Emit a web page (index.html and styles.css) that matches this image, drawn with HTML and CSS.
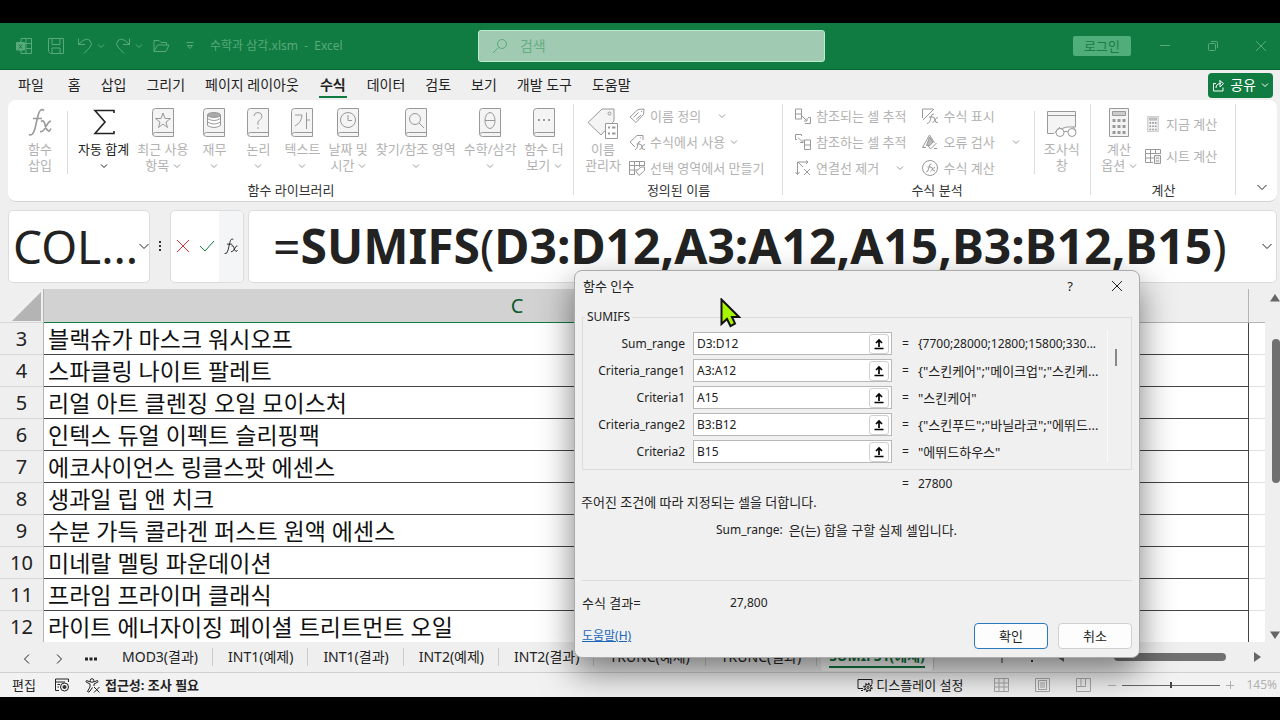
FILE: index.html
```
<!DOCTYPE html>
<html lang="ko">
<head>
  <meta charset="UTF-8" />
  <title>수학과 삼각.xlsm - Excel</title>
  <link rel="stylesheet" href="styles.css">
</head>
<body>

<svg class="defs" width="0" height="0">
  <symbol id="chev" viewBox="0 0 8 8"><path d="M1 2.500L4 5.500L7 2.500"/></symbol>
  <symbol id="book" viewBox="0 0 22 29">
    <path fill="#f4f4f4" d="M3.5 .5H21.5V28.5H3.5Q.5 28.5 .5 25.5V3.5Q.5 .5 3.5 .5Z"/>
    <path d="M.5 26.5Q1 24.5 3.5 24.5H21.5"/>
  </symbol>
  <symbol id="fx" viewBox="0 0 24 28">
    <path stroke-width="1.6" d="M1 26Q5 28 7 20L10 7Q12 -1 16 2M5 10H14M13 13Q16 11 17 16T20 22Q21 24 23 20M23 13Q21 12 18 18T12 23"/>
  </symbol>
  <symbol id="calc" viewBox="0 0 20 29">
    <path fill="#f4f4f4" d="M.5 .5H19.5V28.5H.5Z"/>
    <path d="M3.5 3.5H16.5V7.5H3.5Z" fill="#ccc"/>
    <path stroke-width="3" stroke-dasharray="3 2" d="M3.5 12.5H17M3.5 18.5H17M3.5 24.5H17"/>
  </symbol>
  <symbol id="pick" viewBox="0 0 12 12"><path d="M6 9V2M3 5L6 2L9 5M1.500 10.500H10.500" stroke-width="1.700"/></symbol>
</svg>

<header id="titlebar">
  <div class="quick">
    <button aria-label="Excel"><svg width="16" height="16" viewBox="0 0 16 16"><path d="M5 4V.5H15.500V15.500H5V12M10 .5V15.500M5 5.500H15.500M10 10.500H15.500"/><path fill="#58aa7b" d="M.5 4.500H8.500V12H.5Z"/><path stroke="#107c41" d="M3 6.500L6 10.500M6 6.500L3 10.500"/></svg></button>
    <button aria-label="저장"><svg width="16" height="16" viewBox="0 0 16 16"><path d="M.5 .5H15.500V15.500H2.500L.5 13.500ZM4 .5V6.500H12V.5M4 15.500V10H12V15.500"/></svg></button>
    <button aria-label="실행 취소"><svg width="16" height="16" viewBox="0 0 16 16"><path d="M1.500 .5V6.500H8M1.500 6.500L6 2.500Q10 -.5 13 2.500Q16 6 13 9L7 15.500"/></svg><svg class="chev"><use href="#chev"/></svg></button>
    <button aria-label="다시 실행"><svg width="16" height="16" viewBox="0 0 16 16"><path d="M14.500 .5V6.500H8M14.500 6.500L10 2.500Q6 -.5 3 2.500Q0 6 3 9L9 15.500"/></svg><svg class="chev"><use href="#chev"/></svg></button>
    <button aria-label="열기"><svg width="17" height="14" viewBox="0 0 17 14"><path d="M1 12.500V1.500H6L8 3.500H13.500V6M1 12.500L4.500 6H16L13 12.500Z"/></svg></button>
    <button aria-label="빠른 실행 도구 모음" class="more"><svg width="8" height="8" viewBox="0 0 8 8"><path d="M.5 .5H7.500M1.500 3.500H6.500L4 6.500Z"/></svg></button>
    <span class="filename">수학과 삼각.xlsm&nbsp; -&nbsp; Excel</span>
  </div>
  <div class="search">
    <svg width="16" height="16" viewBox="0 0 16 16"><circle cx="10" cy="6" r="4.500"/><path d="M6.500 9.500L1 15"/></svg>
    <input type="text" placeholder="검색" aria-label="검색">
  </div>
  <div class="window-btns">
    <button class="login">로그인</button>
    <button aria-label="최소화"><svg width="12" height="12" viewBox="0 0 12 12"><path d="M1 5.500H11"/></svg></button>
    <button aria-label="복원"><svg width="12" height="12" viewBox="0 0 12 12"><rect x="1.500" y="3.500" width="7" height="7" rx="1"/><path d="M4 1.500H9Q10.500 1.500 10.500 3V8"/></svg></button>
    <button aria-label="닫기"><svg width="12" height="12" viewBox="0 0 12 12"><path d="M1 1L11 11M11 1L1 11"/></svg></button>
  </div>
</header>

<nav id="menu">
  <button class="file">파일</button>
  <button>홈</button>
  <button>삽입</button>
  <button>그리기</button>
  <button>페이지 레이아웃</button>
  <button class="active">수식</button>
  <button>데이터</button>
  <button>검토</button>
  <button>보기</button>
  <button>개발 도구</button>
  <button>도움말</button>
  <button class="share"><svg width="13" height="13" viewBox="0 0 13 13"><path d="M4 4.500H1.500V12H11V8.500M4 9Q4 4.500 9 4.500M7.500 1.500L11.500 4.500L8 8V1.500"/></svg>공유<svg class="chev"><use href="#chev"/></svg></button>
</nav>

<section id="ribbon">
  <div class="group library">
    <div class="tools">
      <button class="big"><svg width="24" height="29"><use href="#fx"/></svg>함수<br>삽입</button>
      <span class="line"></span>
      <button class="big on"><svg width="22" height="29" viewBox="0 0 22 29"><path stroke-width="1.600" d="M21 5V2.500H2L12 14L2 25.500H21V23"/></svg>자동 합계<br><svg class="chev"><use href="#chev"/></svg></button>
      <button class="big"><svg width="22" height="29"><use href="#book"/><path d="M11 5L13 10.500H18.500L14 14L15.500 19.500L11 16L6.500 19.500L8 14L3.500 10.500H9Z"/></svg>최근 사용<br>항목 <svg class="chev"><use href="#chev"/></svg></button>
      <button class="big"><svg width="22" height="29"><use href="#book"/><path fill="#fff" d="M4.500 7V17.500Q11 21.500 17.500 17.500V7M4.500 10.500Q11 14.500 17.500 10.500M4.500 14Q11 18 17.500 14"/><ellipse cx="11" cy="7" rx="6.500" ry="2.500" fill="#aaa"/></svg>재무<br><svg class="chev"><use href="#chev"/></svg></button>
      <button class="big"><svg width="22" height="29"><use href="#book"/><path d="M7 8Q7 4.500 11 4.500T15 8.500Q15 10.500 12.500 12T11 17M11 19V21"/></svg>논리<br><svg class="chev"><use href="#chev"/></svg></button>
      <button class="big"><svg width="22" height="29"><use href="#book"/><path d="M4 7H11Q11 14 4 18M15.500 4.500V21M15.500 12H19"/></svg>텍스트<br><svg class="chev"><use href="#chev"/></svg></button>
      <button class="big"><svg width="22" height="29"><use href="#book"/><circle cx="11" cy="12" r="7.500"/><path d="M11 7V12.500H15"/></svg>날짜 및<br>시간 <svg class="chev"><use href="#chev"/></svg></button>
      <button class="big"><svg width="22" height="29"><use href="#book"/><circle cx="10" cy="11" r="5.500"/><path d="M14 15L19 20"/></svg>찾기/참조 영역<br><svg class="chev"><use href="#chev"/></svg></button>
      <button class="big"><svg width="22" height="29"><use href="#book"/><ellipse cx="11" cy="12.500" rx="5" ry="8"/><path d="M6 12.500H16"/></svg>수학/삼각<br><svg class="chev"><use href="#chev"/></svg></button>
      <button class="big"><svg width="22" height="29"><use href="#book"/><path stroke-width="2" stroke-dasharray="2 3" d="M5 12H18"/></svg>함수 더<br>보기 <svg class="chev"><use href="#chev"/></svg></button>
    </div>
    <h2>함수 라이브러리</h2>
  </div>

  <div class="group names">
    <div class="tools">
      <button class="big"><svg width="32" height="31" viewBox="0 0 32 31"><path fill="#f4f4f4" d="M1 14.500L15 1H27V13L14 27Z"/><circle cx="22.500" cy="5.500" r="1.500"/><path fill="#fff" d="M18.500 15.500H30.500V30.500H18.500Z"/><path d="M21 19.500H23M21 25.500H23M25 19.500H28.500M25 25.500H28.500" stroke-width="2"/></svg>이름<br>관리자</button>
      <div class="stack">
        <button class="small"><svg viewBox="0 0 16 16"><path d="M1 9L9 1.500L15 1L14.500 6.500L7 14.500ZM4.500 9.500L9.500 4.500M7 11.500L12 7"/><path d="M12.500 3V4"/></svg>이름 정의<svg class="chev far"><use href="#chev"/></svg></button>
        <button class="small"><svg viewBox="0 0 16 16"><path d="M6 13L1 8L8 1.500H14V6"/><path d="M11.500 3.500V4.500M6 16Q8 16 9 10Q9.500 7 11.500 7.500M7.500 10H11M11 10.500Q13 10 13 13T16 15.500M16 10.500Q14 10.500 13 13T10.500 15.500"/></svg>수식에서 사용<svg class="chev"><use href="#chev"/></svg></button>
        <button class="small"><svg viewBox="0 0 16 16"><path d="M6 14.500H.5V1.500H15.500V6M.5 5.500H15.500M.5 10H9M5.500 1.500V14M10.500 1.500V7"/><path fill="#fff" d="M7 11.500L12 7H15.500V10.500L10 15.500Z"/></svg>선택 영역에서 만들기</button>
      </div>
    </div>
    <h2>정의된 이름</h2>
  </div>

  <div class="group audit">
    <div class="tools">
      <div class="stack">
        <button class="small"><svg viewBox="0 0 16 16"><path d="M.5 1H6.500V11H.5ZM.5 6H6.500M10 15.500H15.500V9.500H13M7 8L12 13M12 10V13H9"/></svg>참조되는 셀 추적</button>
        <button class="small"><svg viewBox="0 0 16 16"><path d="M2 5.500H.5V.5H6.500V2M9.500 6H15.500V15.500H9.500ZM9.500 11H15.500M3 3.500L8 8.500M8 5.500V8.500H5"/></svg>참조하는 셀 추적</button>
        <button class="small"><svg viewBox="0 0 16 16"><path d="M2.500 14V2H13M.5 12L2.500 14.500L4.500 12M11 .5L13 2L11 4M3 2L8 7M9 9L15 15M15 9L9 15"/></svg>연결선 제거<svg class="chev far"><use href="#chev"/></svg></button>
      </div>
      <div class="stack checks">
        <button class="small"><svg viewBox="0 0 16 16"><path d="M.5 10V1H11M1 12L12 1M5 15.500Q8 15.500 9 9Q9.500 5.500 12 6M7 9H11.500M11 9.500Q13 9 13 12T16 14.500M16 9.500Q14 9.500 13 12T10.500 14.500"/></svg>수식 표시</button>
        <button class="small"><svg viewBox="0 0 16 16"><path fill="#bbb" d="M7.500 3L4.500 11.500H8L11 8Z"/><path d="M4 13.500H.5L7.500 1L12.500 9M5.500 11L8.500 15L14.500 9M12 14.500H15"/></svg>오류 검사<svg class="chev far"><use href="#chev"/></svg></button>
        <button class="small"><svg viewBox="0 0 16 16"><circle cx="8" cy="8" r="7.500"/><path d="M4 12Q6 12.500 7 7.500Q7.500 3.500 9.500 4M5.500 7H9M9 7.500Q10.500 7 10.500 9T13 11M13 7.500Q11.500 7.500 10.500 9T8.500 11.500"/></svg>수식 계산</button>
      </div>
      <span class="line"></span>
      <button class="big"><svg width="30" height="29" viewBox="0 0 30 29"><path fill="#f4f4f4" d="M7 25.500H.5V3.500H28.500V19H20L10 22L8 25"/><path d="M.5 7.500H28.500"/><g fill="#fff"><circle cx="13" cy="24.500" r="4"/><circle cx="25" cy="24.500" r="4"/></g><path d="M17 24Q19 22.500 21 24M9 23L13 19M29 23L26 19"/></svg>조사식<br>창</button>
    </div>
    <h2>수식 분석</h2>
  </div>

  <div class="group calc">
    <div class="tools">
      <button class="big"><svg width="20" height="29"><use href="#calc"/></svg>계산<br>옵션 <svg class="chev"><use href="#chev"/></svg></button>
      <div class="stack two">
        <button class="small"><svg><use href="#calc"/></svg>지금 계산</button>
        <button class="small"><svg viewBox="0 0 16 16"><path d="M8 14.500H.5V1.500H15.500V6M.5 5.500H15.500M.5 10H9M5.500 1.500V14.500M10.500 1.500V6"/><path fill="#eee" d="M9.500 7.500H15.500V15.500H9.500Z"/><path d="M11 10H14M11 13H14"/></svg>시트 계산</button>
      </div>
    </div>
    <h2>계산</h2>
  </div>

  <button class="collapse" aria-label="리본 축소"><svg width="12" height="12" viewBox="0 0 12 12"><path d="M1.500 4L6 8.500L10.500 4"/></svg></button>
</section>

<section id="formula-bar">
  <div class="name-box">
    <span>COL...</span>
    <svg width="12" height="12" viewBox="0 0 12 12"><path d="M1.500 4L6 8.500L10.500 4"/></svg>
  </div>
  <svg class="dots" width="4" height="14" viewBox="0 0 4 14"><path d="M2 2V12"/></svg>
  <div class="edit-btns">
    <button aria-label="취소"><svg width="14" height="14" viewBox="0 0 14 14"><path stroke="#d13438" d="M1 1L13 13M13 1L1 13"/></svg></button>
    <button aria-label="입력"><svg width="16" height="14" viewBox="0 0 16 14"><path stroke="#107c41" d="M1 7L6 12L15 2"/></svg></button>
    <button class="insert" aria-label="함수 삽입"><svg width="14" height="17"><use href="#fx"/></svg></button>
  </div>
  <div class="formula">
    <div class="text">=<b>SUMIFS</b>(<b>D3:D12,A3:A12,A15,B3:B12,B15</b>)</div>
    <svg width="12" height="12" viewBox="0 0 12 12"><path d="M1.500 4L6 8.500L10.500 4"/></svg>
  </div>
</section>

<main id="sheet">
  <div class="grid">
    <table>
      <colgroup><col class="num"><col><col class="d"><col class="rest"></colgroup>
      <thead>
        <tr><th class="corner"><svg width="29" height="29" viewBox="0 0 29 29"><path d="M29 0V29H0Z"/></svg></th><th class="sel">C</th><th></th><th></th></tr>
      </thead>
      <tbody>
        <tr><th>3</th><td>블랙슈가 마스크 워시오프</td><td></td><td></td></tr>
        <tr><th>4</th><td>스파클링 나이트 팔레트</td><td></td><td></td></tr>
        <tr><th>5</th><td>리얼 아트 클렌징 오일 모이스처</td><td></td><td></td></tr>
        <tr><th>6</th><td>인텍스 듀얼 이펙트 슬리핑팩</td><td></td><td></td></tr>
        <tr><th>7</th><td>에코사이언스 링클스팟 에센스</td><td></td><td></td></tr>
        <tr><th>8</th><td>생과일 립 앤 치크</td><td></td><td></td></tr>
        <tr><th>9</th><td>수분 가득 콜라겐 퍼스트 원액 에센스</td><td></td><td></td></tr>
        <tr><th>10</th><td>미네랄 멜팅 파운데이션</td><td></td><td></td></tr>
        <tr><th>11</th><td>프라임 프라이머 클래식</td><td></td><td></td></tr>
        <tr><th>12</th><td>라이트 에너자이징 페이셜 트리트먼트 오일</td><td></td><td></td></tr>
      </tbody>
    </table>
  </div>
  <div class="vscroll">
    <svg width="10" height="8" viewBox="0 0 10 8"><path d="M5 0L10 7.500H0Z"/></svg>
    <div class="thumb"></div>
    <svg width="10" height="8" viewBox="0 0 10 8"><path d="M5 8L10 .5H0Z"/></svg>
  </div>
</main>

<footer id="tabs">
  <button class="nav" aria-label="이전 시트"><svg width="10" height="12" viewBox="0 0 10 12"><path d="M7 1.500L2.500 6L7 10.500"/></svg></button>
  <button class="nav" aria-label="다음 시트"><svg width="10" height="12" viewBox="0 0 10 12"><path d="M3 1.500L7.500 6L3 10.500"/></svg></button>
  <button class="nav" aria-label="모든 시트"><svg width="12" height="4" viewBox="0 0 12 4"><path stroke-width="3" stroke-dasharray="3 1.500" d="M0 2H12"/></svg></button>
  <button class="tab">MOD3(결과)</button>
  <button class="tab">INT1(예제)</button>
  <button class="tab">INT1(결과)</button>
  <button class="tab">INT2(예제)</button>
  <button class="tab">INT2(결과)</button>
  <button class="tab wide">TRUNC(예제)</button>
  <button class="tab wide">TRUNC(결과)</button>
  <button class="tab current"><span>SUMIFS1(예제)</span></button>
  <div class="hscroll">
    <svg width="12" height="12" viewBox="0 0 12 12"><path stroke="#333" d="M6 0V12M0 6H12"/></svg>
    <svg class="dots" width="4" height="14" viewBox="0 0 4 14"><path d="M2 2V12"/></svg>
    <svg width="8" height="10" viewBox="0 0 8 10"><path fill="#666" d="M8 0V10L1 5Z"/></svg>
    <div class="thumb"></div>
    <svg width="8" height="10" viewBox="0 0 8 10"><path fill="#666" d="M0 0V10L7 5Z"/></svg>
  </div>
</footer>

<footer id="status">
  <span class="mode">편집</span>
  <svg class="macro" width="16" height="14" viewBox="0 0 16 14"><path d="M5 12.500H1.500V1H14.500V4M1.500 4H11M3.500 6.500H6M3.500 9H5"/><circle cx="10.500" cy="9" r="4"/><circle cx="10.500" cy="9" r="1.500" fill="#333"/></svg>
  <svg width="16" height="15" viewBox="0 0 16 15"><circle cx="7" cy="2.500" r="1.800"/><path d="M5.500 4L1.500 2.500Q0 4 2 4.500L5 6V9L2.500 13.500Q4 15 5 13L7.500 9.500M8.500 4L12.500 2.500Q14 4 12 4.500L9 6V8M9 9L14.500 14.500M14.500 9L9 14.500"/></svg>
  <b>접근성: 조사 필요</b>
  <span class="display"><svg width="16" height="14" viewBox="0 0 16 14"><path d="M6 10.500H1V1.500H15V6M4 12.500H6"/><circle cx="11" cy="9.500" r="3"/><circle cx="11" cy="9.500" r="1"/><path stroke-width="1.500" stroke-dasharray="1.500 1.600" d="M11 5.500A4 4 0 1 1 10.900 5.500"/></svg>디스플레이 설정</span>
  <button class="view" aria-label="기본"><svg width="15" height="14" viewBox="0 0 15 14"><path d="M.5 .5H14.500V13.500H.5ZM.5 5H14.500M.5 9H14.500M5 .5V13.500M10 .5V13.500"/></svg></button>
  <button class="view" aria-label="페이지 레이아웃"><svg width="15" height="14" viewBox="0 0 15 14"><path d="M.5 .5H14.500V13.500H.5ZM3.500 2.500H11.500V11.500H3.500ZM5 5H10M5 7H10M5 9H10"/></svg></button>
  <button class="view" aria-label="페이지 나누기"><svg width="15" height="14" viewBox="0 0 15 14"><path d="M.5 .5H14.500V13.500H.5ZM.5 8.500H9.500V.5M5 .5V8.500"/></svg></button>
  <div class="zoom">
    <svg width="8" height="8" viewBox="0 0 8 8"><path d="M0 4.500H8"/></svg>
    <input type="range" min="0" max="100" value="50" aria-label="확대/축소">
    <svg width="8" height="8" viewBox="0 0 8 8"><path d="M0 4.500H8M4.500 0V8"/></svg>
    <span>145%</span>
  </div>
</footer>

<form id="dialog" onsubmit="return false">
  <div class="caption">
    <span>함수 인수</span>
    <button type="button" aria-label="도움말">?</button>
    <button type="button" aria-label="닫기"><svg width="12" height="12" viewBox="0 0 12 12"><path d="M1 1L11 11M11 1L1 11"/></svg></button>
  </div>
  <fieldset>
    <legend>SUMIFS</legend>
    <div class="args">
      <div class="arg">
        <label for="a1">Sum_range</label>
        <div class="ref"><input id="a1" type="text" value="D3:D12"><button type="button" aria-label="범위 선택"><svg><use href="#pick"/></svg></button></div>
        <span class="eq">=</span><span>{7700;28000;12800;15800;330...</span>
      </div>
      <div class="arg">
        <label for="a2">Criteria_range1</label>
        <div class="ref"><input id="a2" type="text" value="A3:A12"><button type="button" aria-label="범위 선택"><svg><use href="#pick"/></svg></button></div>
        <span class="eq">=</span><span class="ko">{"스킨케어";"메이크업";"스킨케...</span>
      </div>
      <div class="arg">
        <label for="a3">Criteria1</label>
        <div class="ref"><input id="a3" type="text" value="A15"><button type="button" aria-label="범위 선택"><svg><use href="#pick"/></svg></button></div>
        <span class="eq">=</span><span class="ko">"스킨케어"</span>
      </div>
      <div class="arg">
        <label for="a4">Criteria_range2</label>
        <div class="ref"><input id="a4" type="text" value="B3:B12"><button type="button" aria-label="범위 선택"><svg><use href="#pick"/></svg></button></div>
        <span class="eq">=</span><span class="ko">{"스킨푸드";"바닐라코";"에뛰드...</span>
      </div>
      <div class="arg">
        <label for="a5">Criteria2</label>
        <div class="ref"><input id="a5" type="text" value="B15"><button type="button" aria-label="범위 선택"><svg><use href="#pick"/></svg></button></div>
        <span class="eq">=</span><span class="ko">"에뛰드하우스"</span>
      </div>
    </div>
    <div class="arg-scroll"><div class="thumb"></div></div>
  </fieldset>
  <div class="result"><span class="eq">=</span><span>27800</span></div>
  <p class="desc">주어진 조건에 따라 지정되는 셀을 더합니다.</p>
  <p class="arg-desc"><span>Sum_range:</span><span>은(는) 합을 구할 실제 셀입니다.</span></p>
  <div class="total"><span>수식 결과=</span><span>27,800</span></div>
  <div class="actions">
    <a href="#">도움말(H)</a>
    <button type="submit" class="ok">확인</button>
    <button type="button">취소</button>
  </div>
</form>

<svg id="cursor" width="21" height="30" viewBox="0 0 21 30"><path d="M1.500 1.500V26L7 21L10.500 28L15 25.500L12 19H19Z"/></svg>

</body>
</html>
```
FILE: styles.css
```
* {
  box-sizing: border-box;
}

body {
  margin: 0;
  padding: 23px 0;
  height: 100vh;
  display: flex;
  flex-direction: column;
  overflow: hidden;
  background: #000;
  font-family: "Noto Sans", "Noto Sans CJK KR", sans-serif;
  font-size: 13px;
  line-height: 16px;
  color: #222;
}

button, input {
  font: inherit;
  color: inherit;
  background: none;
  border: none;
  padding: 0;
  margin: 0;
}

button {
  white-space: nowrap;
}

svg {
  fill: none;
  stroke: currentColor;
  flex-shrink: 0;
}

.defs {
  position: absolute;
}

.chev {
  width: 8px;
  height: 8px;
}

.dots {
  stroke: #333;
  stroke-width: 2;
  stroke-dasharray: 2 2;
}

/* title bar */
#titlebar {
  height: 47px;
  flex-shrink: 0;
  display: grid;
  grid-template-columns: 1.05fr 347px 1fr;
  align-items: center;
  background: #107c41;
  border-bottom: 1px solid #0b6434;
  color: #58aa7b;
}

.quick {
  display: flex;
  align-items: center;
  gap: 16px;
  padding-left: 16px;
}

.quick button {
  display: flex;
  align-items: center;
  gap: 4px;
}

.quick button:nth-child(3), .quick button:nth-child(4) {
  margin: 0 -3px;
}

.quick button:nth-child(5) {
  margin-left: -3px;
}

.filename {
  font-size: 12px;
}

.search {
  display: flex;
  align-items: center;
  gap: 12px;
  height: 32px;
  padding-left: 13px;
  background: #a0cab1;
  border: 1px solid #b9ebcd;
  border-radius: 3px;
}

.search input {
  flex: 1;
  font-size: 14px;
}

.search input::placeholder {
  color: #64ae84;
}

.window-btns {
  display: flex;
  align-items: center;
  justify-content: flex-end;
  gap: 36px;
  padding-right: 13px;
}

.window-btns button {
  display: flex;
}

.window-btns .login {
  height: 20px;
  padding: 2px 11px;
  margin-right: -8px;
  background: #4fae79;
  color: #1c7c47;
  border-radius: 2px;
}

/* menu */
#menu {
  display: flex;
  align-items: center;
  gap: 20px;
  height: 30px;
  flex-shrink: 0;
  padding: 0 7px 0 18px;
  background: #efefef;
  font-size: 14px;
}

#menu button {
  height: 26px;
}

#menu .file {
  margin-right: 4px;
}

#menu .active {
  font-weight: bold;
  border-bottom: 2px solid #107c41;
  padding: 2px 1px 0;
}

#menu .share {
  display: flex;
  align-items: center;
  gap: 5px;
  height: 25px;
  margin-left: auto;
  padding: 0 4px;
  background: #107c41;
  color: #fff;
  border-radius: 4px;
}

/* ribbon */
#ribbon {
  display: flex;
  height: 110px;
  flex-shrink: 0;
  padding: 0 3px 8px 8px;
  background: #efefef;
  color: #b2b2b2;
}

.group {
  display: flex;
  flex-direction: column;
  background: #fff;
  border-bottom: 1px solid #d4d4d4;
  position: relative;
}

.group::after {
  content: "";
  position: absolute;
  right: 0;
  top: 4px;
  bottom: 6px;
  border-right: 1px solid #dcdcdc;
}

.group h2 {
  margin: 4px 0 0;
  font-size: 13px;
  font-weight: normal;
  line-height: 16px;
  text-align: center;
  color: #333;
}

.tools {
  display: flex;
  height: 78px;
  padding-top: 8px;
}

.library {
  width: 566px;
  padding-left: 10px;
  border-radius: 8px 0 0 8px;
}

.library h2 {
  margin-left: -10px;
}

.names {
  width: 209px;
}

.audit {
  width: 308px;
}

.calc {
  width: 145px;
}

.line {
  width: 1px;
  height: 63px;
  margin: 3px 6px 0 5px;
  background: #dcdcdc;
}

.big {
  min-width: 44px;
  padding: 0 4px;
  line-height: 16px;
  text-align: center;
  align-self: flex-start;
}

.big > svg:first-child {
  display: block;
  margin: 0 auto 4px;
  stroke: #999;
}

.big .chev {
  stroke: #999;
}

.big.on, .big.on > svg, .big.on .chev {
  color: #222;
  stroke: #222;
}

.names .big {
  margin-left: 7px;
}

.names .big > svg:first-child {
  margin: 0 auto 2px;
}

.stack {
  display: flex;
  flex-direction: column;
  align-items: flex-start;
  margin: -5px 0 0 4px;
}

.small {
  display: flex;
  align-items: center;
  gap: 5px;
  height: 26px;
  flex-shrink: 0;
}

.small > svg {
  width: 16px;
  height: 16px;
  stroke: #999;
}

.small > .chev {
  width: 8px;
  height: 8px;
}

.small > .far {
  margin-left: 12px;
}

.audit .stack {
  margin-left: 12px;
}

.audit .checks {
  margin-left: 16px;
}

.audit .line {
  margin: 3px 5px 0 14px;
}

.calc .big {
  margin-left: 6px;
}

.two {
  padding-top: 5px;
}

.two .small {
  height: 32px;
}

.collapse {
  flex: 1;
  display: flex;
  align-items: flex-end;
  justify-content: flex-end;
  padding: 0 9px 8px;
  background: #fff;
  border-bottom: 1px solid #d4d4d4;
  border-radius: 0 8px 8px 0;
  color: #222;
}

/* formula bar */
#formula-bar {
  display: flex;
  align-items: center;
  height: 79px;
  flex-shrink: 0;
  padding: 0 3px 7px 8px;
  background: #efefef;
}

.name-box, .edit-btns, .formula {
  display: flex;
  align-items: center;
  height: 73px;
  background: #fff;
  border: 1px solid #dcdcdc;
  border-radius: 5px;
}

.name-box {
  width: 142px;
  padding-left: 4px;
}

.name-box span {
  flex: 1;
  font-size: 46px;
  line-height: 72px;
}

#formula-bar > .dots {
  margin: 0 8px;
}

.edit-btns {
  width: 74px;
  overflow: hidden;
}

.edit-btns button {
  flex: 1;
  height: 100%;
  display: flex;
  align-items: center;
  justify-content: center;
}

.edit-btns .insert {
  background: #f4f5f6;
}

.formula {
  flex: 1;
  margin-left: 4px;
  padding: 0 3px 0 24px;
}

.formula .text {
  flex: 1;
  font-size: 48px;
  line-height: 72px;
  white-space: nowrap;
}

/* sheet */
#sheet {
  flex: 1;
  min-height: 0;
  display: flex;
  background: #efefef;
}

.grid {
  flex: 1;
  overflow: hidden;
}

.grid table {
  width: 100%;
  table-layout: fixed;
  border-collapse: separate;
  border-spacing: 0;
}

.num {
  width: 44px;
}

.d {
  width: 258px;
}

.rest {
  width: 16px;
}

.grid th {
  height: 32px;
  padding: 0;
  font-size: 20px;
  line-height: 24px;
  font-weight: normal;
  background: #efefef;
  border-right: 1px solid #b4b4b4;
  border-bottom: 1px solid #d8d8d8;
}

.grid thead th {
  height: 34px;
  border-bottom: 1px solid #b4b4b4;
}

.grid thead th:last-child {
  border-right: none;
}

.grid thead .sel {
  background: #d2d2d2;
  border-bottom-color: #107c41;
  color: #0b5a2e;
}

.grid thead .corner {
  text-align: right;
  border-bottom-color: #d8d8d8;
}

.corner svg {
  display: block;
  margin: 2px 2px 0 auto;
  fill: #b4b4b4;
  stroke: none;
}

.grid td {
  height: 32px;
  padding: 0 4px;
  background: #fff;
  border-bottom: 1px solid #444;
  font-size: 23px;
  line-height: 30px;
  white-space: nowrap;
  color: #111;
}

.grid td:nth-child(3) {
  border-right: 1px solid #444;
}

.grid td:nth-child(4) {
  border-bottom-color: #e0e0e0;
}

.vscroll {
  width: 15px;
  display: flex;
  flex-direction: column;
  align-items: flex-end;
  padding: 5px 0 3px;
}

.vscroll svg {
  fill: #666;
  stroke: none;
}

.vscroll .thumb {
  width: 8px;
  height: 144px;
  margin: 37px 0 auto;
  background: #707070;
  border-radius: 4px;
}

/* sheet tabs */
#tabs {
  display: flex;
  align-items: center;
  height: 31px;
  flex-shrink: 0;
  padding-left: 11px;
  background: #efefef;
  border-bottom: 1px solid #d0d0d0;
}

#tabs .nav {
  width: 32px;
}

#tabs .nav svg {
  vertical-align: middle;
}

.tab {
  height: 18px;
  padding: 0 14px 0 15px;
  border-right: 1px solid #ccc;
  font-size: 14px;
}

.tab.wide {
  padding: 0 15px;
}

.tab.current {
  height: 27px;
  padding: 0 8px;
  margin-left: 4px;
  background: #fff;
  border-radius: 0 0 4px 4px;
  font-weight: bold;
  color: #107c41;
}

.tab.current span {
  display: block;
  line-height: 20px;
  border-bottom: 2px solid #107c41;
}

.hscroll {
  flex: 1;
  display: flex;
  align-items: center;
  justify-content: flex-end;
  gap: 22px;
  padding-right: 18px;
}

.hscroll svg {
  stroke: none;
}

.hscroll .dots {
  stroke: #333;
}

.hscroll .thumb {
  width: 112px;
  height: 8px;
  margin-left: 28px;
  margin-right: 6px;
  background: #707070;
  border-radius: 4px;
}

/* status bar */
#status {
  display: flex;
  align-items: center;
  height: 24px;
  flex-shrink: 0;
  padding: 0 3px 0 12px;
  background: #f2f2f2;
}

#status b {
  margin-left: 4px;
}

.macro {
  margin: 0 15px 0 18px;
}

.display {
  display: flex;
  align-items: center;
  gap: 3px;
  margin-left: auto;
}

.view {
  display: flex;
  margin-left: 26px;
  color: #a8a8a8;
}

.display + .view {
  margin-left: 31px;
}

.zoom {
  display: flex;
  align-items: center;
  gap: 6px;
  margin-left: 17px;
  color: #b0b0b0;
}

.zoom span {
  margin-left: 6px;
  font-size: 12px;
}

.zoom input {
  -webkit-appearance: none;
  appearance: none;
  width: 98px;
  height: 10px;
  background: linear-gradient(#666, #666) center / 100% 1px no-repeat;
}

.zoom input::-webkit-slider-thumb {
  -webkit-appearance: none;
  width: 2px;
  height: 6px;
  background: #444;
}

/* function arguments dialog */
#dialog {
  position: absolute;
  left: 574px;
  top: 270px;
  width: 566px;
  padding: 0 7px 8px;
  background: #f0f0f0;
  border: 1px solid #aaa;
  border-radius: 8px;
  box-shadow: 0 14px 34px rgba(0, 0, 0, 0.5);
  font-size: 12px;
}

.caption {
  display: flex;
  align-items: center;
  height: 30px;
  padding: 0 9px 0 1px;
  font-size: 13px;
}

.caption span {
  flex: 1;
}

.caption button {
  margin-left: 38px;
}

.caption svg {
  display: block;
}

fieldset {
  display: flex;
  margin: 8px 0 0;
  padding: 5px 0 4px;
  border: 1px solid #dcdcdc;
}

legend {
  margin-left: 2px;
  padding: 0 2px;
}

.args {
  flex: 1;
}

.arg {
  display: flex;
  align-items: center;
  height: 27px;
}

.arg label {
  width: 102px;
  margin-right: 8px;
  text-align: right;
}

.ref {
  display: flex;
  align-items: center;
  width: 199px;
  height: 23px;
  padding-right: 2px;
  background: #fff;
  border: 1px solid #b8b8b8;
}

.ref input {
  flex: 1;
  min-width: 0;
  padding-left: 3px;
}

.ref button {
  width: 20px;
  height: 20px;
  border: 1px solid #d0d0d0;
  border-radius: 3px;
  color: #000;
}

.ref svg {
  display: block;
  width: 12px;
  height: 12px;
  margin: 0 auto;
}

.eq {
  width: 16px;
  margin-left: 10px;
}

.ko {
  font-size: 13px;
  white-space: nowrap;
}

.arg-scroll {
  width: 24px;
  margin-bottom: 3px;
  border-left: 1px solid #fafafa;
}

.arg-scroll .thumb {
  width: 2px;
  height: 17px;
  margin: 19px 0 0 7px;
  background: #888;
}

.result {
  display: flex;
  padding: 6px 0 0 310px;
}

.desc, .arg-desc {
  margin: 2px 0 0;
  font-size: 13px;
}

.desc {
  margin-left: -1px;
}

.arg-desc {
  display: flex;
  gap: 6px;
  margin-top: 12px;
  padding: 0 0 42px 134px;
  border-bottom: 1px solid #dcdcdc;
}

.arg-desc span:first-child {
  font-size: 12px;
}

.total {
  display: flex;
  margin: 14px 0 12px;
}

.total span:first-child {
  width: 148px;
  font-size: 13px;
}

.actions {
  display: flex;
  align-items: center;
  gap: 10px;
}

.actions a {
  margin-right: auto;
  color: #1a66b8;
}

.actions button {
  width: 74px;
  height: 26px;
  background: #fdfdfd;
  border: 1px solid #d0d0d0;
  border-radius: 4px;
  font-size: 13px;
}

.actions .ok {
  border-color: #2a7ac0;
}

#cursor {
  position: absolute;
  left: 720px;
  top: 298px;
  fill: #a8f500;
  stroke: #111;
  stroke-width: 2;
}
```
